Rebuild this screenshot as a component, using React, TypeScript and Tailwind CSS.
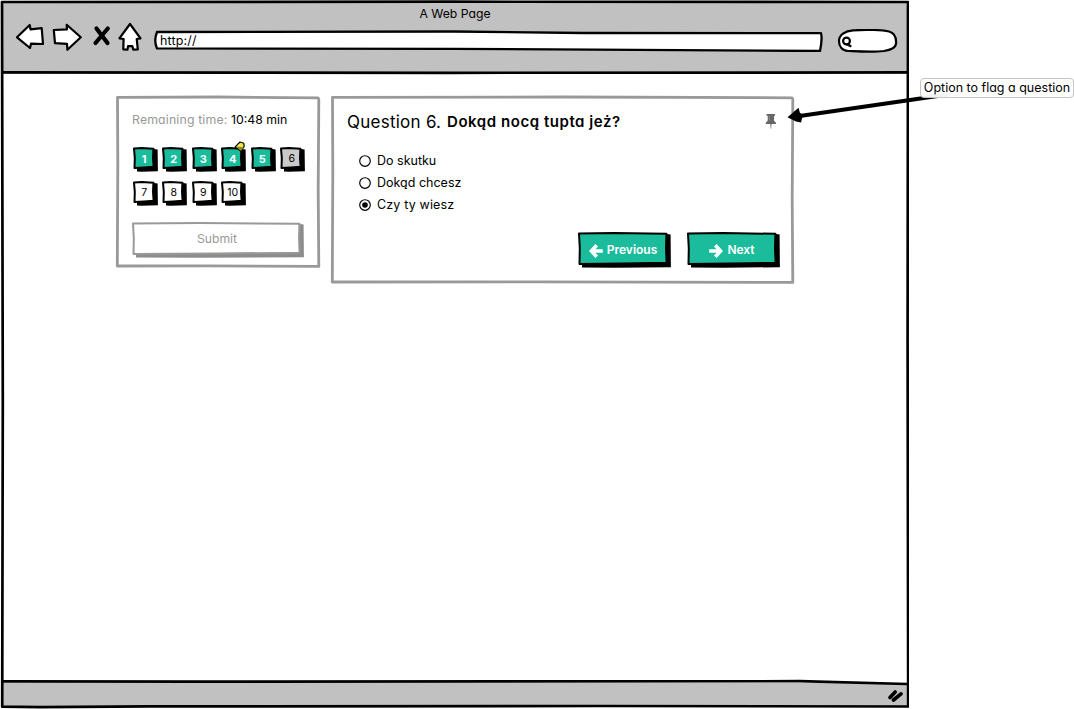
import { useState, type ReactNode } from "react";

const stack = "[grid-area:1/1]";

function SketchFrame({ w, h, stroke, fill, sw = 3 }: { w: number; h: number; stroke: string; fill: string; sw?: number }) {
  return (
    <svg className={`${stack} overflow-visible`} width={w} height={h} aria-hidden="true">
      <path
        d={`M1.5 1.3 L${w * 0.5} 1 L${w - 2.2} 1.8 Q${w - 1} 2 ${w - 1.2} 5 L${w - 1.8} ${h * 0.55} L${w - 1.2} ${h - 1.6} L${w * 0.45} ${h - 2.2} L1.3 ${h - 2} L1.8 ${h * 0.4} Z`}
        fill={fill}
        stroke={stroke}
        strokeWidth={sw}
        strokeLinejoin="round"
      />
    </svg>
  );
}

function ShadowButton({
  w,
  h,
  fill,
  stroke = "#000",
  shadow = "#000",
  className,
  onClick,
  children,
}: {
  w: number;
  h: number;
  fill: string;
  stroke?: string;
  shadow?: string;
  className: string;
  onClick?: () => void;
  children: ReactNode;
}) {
  return (
    <button type="button" onClick={onClick} className={`grid ${className}`}>
      <svg className={`${stack} overflow-visible`} width={w} height={h} aria-hidden="true">
        <path d={`M4 5 L${w - 1} 2 L${w + 2.6} 2.4 L${w + 2.9} ${h + 2.2} L${w * 0.4} ${h + 2.8} L4 ${h + 2.6} Z`} fill={shadow} />
        <path
          d={`M1 1.6 L${w * 0.4} 1 L${w - 1.6} 1.8 L${w - 2} ${h * 0.5} L${w - 1.4} ${h - 2.2} L${w * 0.5} ${h - 1.6} L1.5 ${h - 1} L1.8 ${h * 0.5} Z`}
          fill={fill}
          stroke={stroke}
          strokeWidth="2"
          strokeLinejoin="round"
        />
      </svg>
      <span className={`${stack} flex items-center justify-center pt-[2px] pl-[1px]`}>{children}</span>
    </button>
  );
}

function BrowserBar() {
  return (
    <header className="h-[73px] bg-[#c1c1c1] pt-[5px]">
      <h1 className="h-4 text-center text-[12.2px] leading-4">A Web Page</h1>
      <div className="flex h-[32px] items-start pl-[12px]">
        <svg width="130" height="32" viewBox="14 22 130 32" fill="#fff" stroke="#000" strokeWidth="2.2" strokeLinejoin="round" aria-hidden="true">
          <path d="M17 37.3 L29.7 25 L30.5 29.3 L41.7 28.2 L43 44 L31 43.7 L30 48 Z" />
          <path d="M53.8 30 L67 29.4 L66.7 24.8 L80.8 37.3 L67.4 49.8 L67 43.8 L55 43.2 Z" />
          <path d="M96.5 28.5 L107.5 43 M107.8 28.5 L95.5 43" strokeWidth="4.2" strokeLinecap="round" />
          <path d="M130 24 L140.5 38.3 L136.7 39 L137.8 49.5 L133.3 49.6 L132.3 46 L128 46.2 L127.5 49.6 L123.3 49.3 L123.6 39 L119.4 38.3 Z" />
        </svg>
        <label className="ml-[9px] mt-[8px] grid h-[22px] w-[670px]">
          <svg className={stack} width="670" height="22" fill="#fff" stroke="#000" strokeWidth="2.3" strokeLinejoin="round" aria-hidden="true">
            <path d="M4 2 L300 1.5 L430 3 L668 3.2 Q669.5 9 667 21 L300 18.8 L4 18.4 Q.5 11 4 2 Z" />
          </svg>
          <span className={`${stack} pl-[7px] pt-[3px] text-[12.5px] leading-4 tracking-[0.15px]`}>http://</span>
        </label>
        <svg className="ml-[13px] mt-[7px]" width="62" height="25" viewBox="836 29 62 25" fill="#fff" stroke="#000" strokeWidth="2.2" aria-hidden="true">
          <path d="M839 41 C839 35 845 31 853 30.4 C866 29.3 883 30 889 31.5 C895 33 896.5 38 896 44 C895.5 48 890 50 884 51 C873 52.5 859 51.5 848 51 C842 50.5 839 46 839 41 Z" />
          <circle cx="846.5" cy="41" r="3.4" />
          <path d="M847.5 44.3 L850.3 46" strokeLinecap="round" strokeWidth="2.6" />
        </svg>
      </div>
    </header>
  );
}

const answered = "#1abc9c";

function Sidebar({ current, onSelect }: { current: number; onSelect: (n: number) => void }) {
  return (
    <aside className="grid h-[172px] w-[204px]">
      <SketchFrame w={204} h={172} stroke="#999" fill="#fff" sw={2.8} />
      <div className={`${stack} pl-[16px] pt-[16px]`}>
        <p className="flex h-4 text-[12.3px] leading-4">
          <span className="w-[99px] tracking-[0.15px] text-[#999]">Remaining time:</span>
          <span>10:48 min</span>
        </p>
        <div className="mt-[19px] grid grid-cols-[repeat(6,29.5px)] gap-y-[12px] pl-[0.7px]">
          {[1, 2, 3, 4, 5, 6, 7, 8, 9, 10].map((n) => (
            <div key={n} className="relative h-[22px]">
              <ShadowButton
                w={22}
                h={22}
                fill={n < 6 ? answered : n === current ? "#cacaca" : "#fff"}
                className={n < 6 ? "text-[11px] font-bold text-white" : "text-[10.5px]"}
                onClick={() => onSelect(n)}
              >
                {n}
              </ShadowButton>
              {n === 4 && (
                <svg className="absolute left-[13px] top-[-6px]" width="12" height="12" viewBox="0 0 12 12" aria-hidden="true">
                  <path d="M6 1 L9.8 2.2 L10.2 5.5 L6.8 10.2 L1.2 5.8 Z" fill="#ece83f" stroke="#000" strokeWidth="1.2" strokeLinejoin="round" />
                  <path d="M2 6 Q6 5.5 9.5 6.5 L7 10 Z" fill="#8f8a23" />
                  <path d="M5 3.5 L6 5" stroke="#ffffc8" />
                </svg>
              )}
            </div>
          ))}
        </div>
        <ShadowButton w={169} h={33} fill="#fff" stroke="#999" shadow="#8c8c8c" className="mt-[19px] text-[12.2px] text-[#999]">
          Submit
        </ShadowButton>
      </div>
    </aside>
  );
}

const options = ["Do skutku", "Dokąd chcesz", "Czy ty wiesz"];

function QuestionPanel({ choice, onChoose }: { choice: number; onChoose: (i: number) => void }) {
  return (
    <main className="grid h-[188px] w-[463px]">
      <SketchFrame w={463} h={188} stroke="#999" fill="#fff" sw={2.8} />
      <div className={`${stack} flex flex-col px-[16px] pt-[15px]`}>
        <div className="flex h-[22px] items-start justify-between">
          <h2 className="flex text-[17px] leading-[22px]">
            <span className="w-[100px] tracking-[0.25px]">Question 6.</span>
            <strong className="text-[15px] font-semibold tracking-[0.55px]">Dokąd nocą tupta jeż?</strong>
          </h2>
          <svg className="mr-[1px] mt-[3px]" width="12" height="16" viewBox="0 0 12 16" aria-hidden="true">
            <path d="M1.5 0 H10 V1.8 H9 V6.7 Q11.2 8 11.2 10 H.6 Q.6 8 2.7 6.7 V1.8 H1.5 Z" fill="#666" />
            <path d="M5.2 10 H6.6 L6.1 15 H5.7 Z" fill="#777" />
            <path d="M4.3 2 V6.8" stroke="#a78275" />
          </svg>
        </div>
        <ul className="mt-[20px] pl-[12px] text-[12.5px]">
          {options.map((o, i) => (
            <li key={o} className="h-[22px]">
              <button type="button" onClick={() => onChoose(i)} className="flex items-center gap-[6px] leading-[16px]">
                <svg className="mb-[1px]" width="12" height="12" viewBox="0 0 12 12" aria-hidden="true">
                  <circle cx="6" cy="6" r="5.3" fill="#fff" stroke="#000" strokeWidth="1.15" />
                  {i === choice && <circle cx="6" cy="6" r="2.8" />}
                </svg>
                <span className={i === 2 ? "tracking-[0.15px]" : ""}>{o}</span>
              </button>
            </li>
          ))}
        </ul>
        <div className="mt-[13px] flex justify-end gap-[19px] pr-[1.5px] text-[12px] font-semibold text-white">
          <ShadowButton w={90} h={33} fill={answered} className="">
            <svg className="mr-[4px] mt-[2px]" width="14" height="14" viewBox="0 0 14 14" fill="none" stroke="#fff" strokeWidth="3.6" aria-hidden="true">
              <path d="M7.7 1.3 L2.4 7 L7.7 12.7 M2.5 7 H13.8" />
            </svg>
            Previous
          </ShadowButton>
          <ShadowButton w={90} h={33} fill={answered} className="">
            <svg className="mr-[4px] mt-[2px]" width="14" height="14" viewBox="0 0 14 14" fill="none" stroke="#fff" strokeWidth="3.6" aria-hidden="true">
              <path d="M6.3 1.3 L11.6 7 L6.3 12.7 M11.5 7 H.2" />
            </svg>
            Next
          </ShadowButton>
        </div>
      </div>
    </main>
  );
}

export default function App() {
  const [current, setCurrent] = useState(6);
  const [choice, setChoice] = useState(2);
  return (
    <div className="relative h-[709px] w-[1074px] overflow-hidden bg-white font-['Inter',sans-serif] text-black [font-feature-settings:'cv11']">
      <div className="grid w-[909px]">
        <div className={`${stack} flex h-[707px] flex-col pl-[2px] pr-[1px] pt-[1px]`}>
          <BrowserBar />
          <div className="flex flex-1 gap-[11px] pl-[114px] pt-[22px]">
            <Sidebar current={current} onSelect={setCurrent} />
            <QuestionPanel choice={choice} onChoose={setChoice} />
          </div>
          <footer className="flex h-[24px] items-center justify-end bg-[#c1c1c1] pr-[4px]">
            <svg width="17" height="13" viewBox="0 0 17 13" stroke="#000" strokeWidth="3.6" strokeLinecap="round" aria-hidden="true">
              <path d="M3 8.5 L8.2 3 M6.5 11 L14 4.8" />
            </svg>
          </footer>
        </div>
        <svg className={`${stack} pointer-events-none`} width="909" height="709" fill="none" stroke="#000" strokeWidth="2.7" strokeLinejoin="round" aria-hidden="true">
          <path d="M2 2 L450 1.7 L908 2 L907.6 340 L908.2 706.5 L600 706 L150 706.4 L40 707.2 L2.2 706.7 L2.8 400 L2 2 Z" />
          <path d="M3 72.4 L450 72.8 L907 72.4" />
          <path d="M3 681.3 L200 681.7 L800 681.2 L907 684" />
        </svg>
      </div>
      <svg className="pointer-events-none absolute left-[785px] top-[90px]" width="165" height="40" viewBox="785 90 165 40" aria-hidden="true">
        <path d="M798 116.3 L948 94.5" stroke="#000" strokeWidth="4" />
        <path d="M787.5 117.3 L798.5 107.8 L800 113 L803 114.5 L801 122.5 L796 121.5 Z" />
      </svg>
      <aside className="absolute left-[920px] top-[78px] flex h-[20px] w-[154px] items-center justify-center rounded-[4px] border border-[#c4c4c4] bg-white/95 text-[12.5px] whitespace-nowrap">
        Option to flag a question
      </aside>
    </div>
  );
}
